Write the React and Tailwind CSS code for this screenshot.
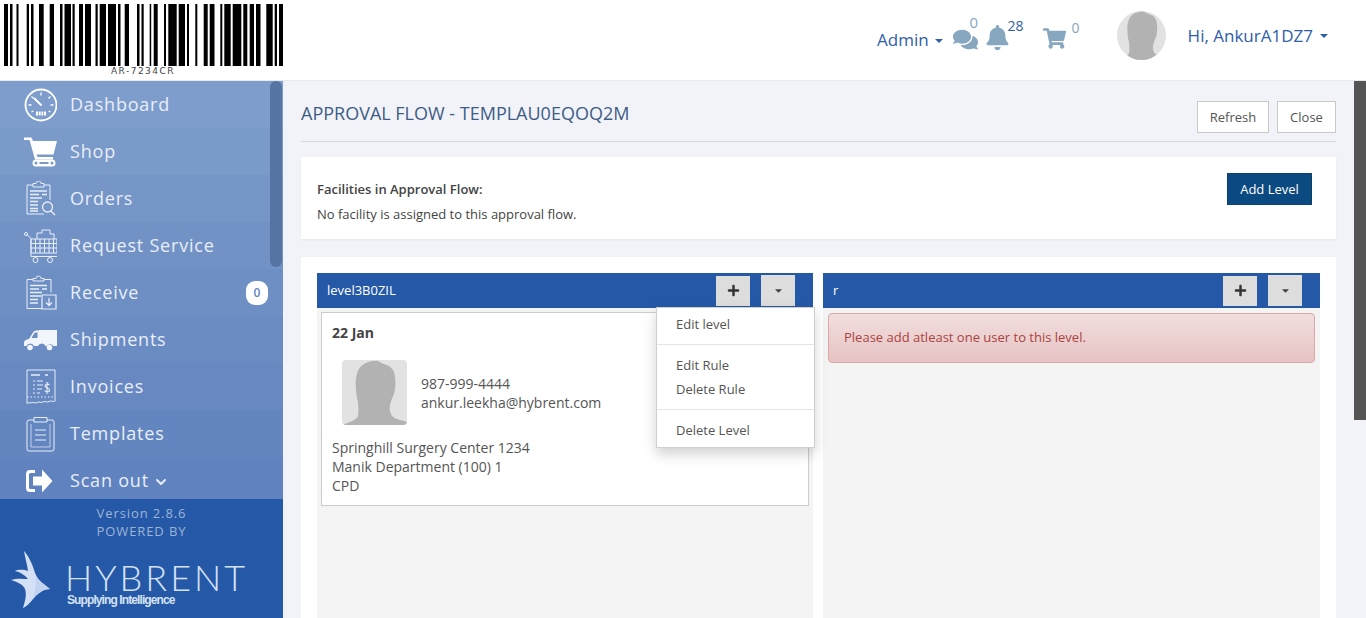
import { ChevronDown } from "lucide-react"
import { FaBell, FaComments, FaShoppingCart, FaPlus, FaCaretDown } from "react-icons/fa"

const bars = [
  [4, 4], [10, 2.5], [16.5, 2], [26.7, 2.3], [31, 2.5], [39, 4.7], [49.7, 4.3], [60, 2.5], [64.5, 6.5], [72.5, 2.2],
  [79, 4], [85, 6], [95.5, 2.2], [99.7, 6.3], [108, 8], [118, 2.5], [124.7, 4.3], [137, 2.5], [141.5, 2.2], [149.7, 1.5],
  [153.7, 4], [164, 2], [168.3, 8.4], [178.7, 6.3], [187, 2], [195.3, 2], [203.7, 4], [209.7, 4.8], [220.3, 2], [224.3, 6.4],
  [232.7, 8.6], [243.3, 4], [249.7, 4.3], [256, 4.5], [266.3, 6.4], [274.7, 2.3], [279, 4],
]

function Silhouette({ className }) {
  return (
    <svg viewBox="0 0 65 65" className={className}>
      <rect width="65" height="65" fill="#e2e2e2" />
      <path
        d="M1 65C6 62 14 61 16 56C17 51 16 46 16 42C15 38 14 34 14 29C13 22 14 14 17 9C21 3 29 0 36 1C39 3 42 4 45 5C50 7 53 12 53 18C54 24 53 30 52 34C50 38 49 41 48 45C47 49 48 53 50 56C54 60 60 60 65 62V65Z"
        fill="#b2b2b2"
      />
    </svg>
  )
}

function DashIcon() {
  return (
    <svg viewBox="0 0 33 36" className="w-[33px] h-[36px]" fill="none" stroke="#fff">
      <circle cx="17" cy="18" r="15.5" strokeWidth="1.8" />
      <path d="M17 5.5v3M7.5 9.5l2 2M26.5 9.5l-2 2M4.5 18h3M26.5 18h3M7.5 25l2-1M26.5 25l-2-1" strokeWidth="1.3" />
      <path d="M10 11l7.5 7.5" strokeWidth="2" />
      <path d="M12 24.5h10v4H12z" fill="#fff" stroke="none" />
      <path d="M14.5 24v5M17 24v5M19.5 24v5" stroke="#7c9aca" strokeWidth="0.8" />
    </svg>
  )
}

function ShopIcon() {
  return (
    <svg viewBox="0 0 33 36" className="w-[33px] h-[36px]" fill="#fff">
      <path d="M0 3.5h7.5l1.5 3.5h24l-3.5 13.5H12.5l1 2.500h15.500v2.500H11L5.500 6H0z" />
      <path d="M12 25.500h16a3.500 3.500 0 0 1 0 7H12a3.500 3.500 0 0 1 0-7zM12 27.500a1.500 1.500 0 0 0 0 3a1.500 1.500 0 0 0 0-3zM28 27.500a1.500 1.500 0 0 0 0 3a1.500 1.500 0 0 0 0-3zM15.500 28v2h9v-2z" fillRule="evenodd" />
    </svg>
  )
}

function OrdersIcon() {
  return (
    <svg viewBox="0 0 33 36" className="w-[33px] h-[36px]" fill="none" stroke="#e8eef8" strokeWidth="1">
      <path d="M9 4H3v29h17M20 4h6v15" />
      <path d="M9 5V2.500h3a2 2 0 0 1 5 0h3V6H9z" />
      <path d="M6 10h17M6 13.500h9M18 13.500h5M6 17h12M6 20.500h8M6 24h8M6 27.500h8M6 30h8" strokeWidth="1.300" />
      <circle cx="23.500" cy="26" r="5" strokeWidth="1.300" />
      <path d="M27 30l4 4" strokeWidth="1.500" />
    </svg>
  )
}

function RequestIcon() {
  return (
    <svg viewBox="0 0 33 36" className="w-[33px] h-[36px]" fill="none" stroke="#e8eef8" strokeWidth="1">
      <circle cx="2" cy="6" r="1.500" />
      <path d="M3 6.500l4 4v18h26" />
      <path d="M7 11h26v14H7zM7 15.500h26M7 20h26M11.500 11v14M16 11v14M20.500 11v14M25 11v14M29.500 11v14" />
      <path d="M13 11V5h5V2h8v4h4v5" />
      <circle cx="11.500" cy="32" r="2.500" />
      <circle cx="26" cy="32" r="2.500" />
    </svg>
  )
}

function ReceiveIcon() {
  return (
    <svg viewBox="0 0 33 36" className="w-[33px] h-[36px]" fill="none" stroke="#e8eef8" strokeWidth="1">
      <path d="M9 4.500H3v29h15M20 4.500h7v13" />
      <path d="M9 6V3.500h3a2 2 0 0 1 5 0h3V6H9z" />
      <path d="M6 10.500h17M6 14h9M18 14h5M6 17.500h12M6 21h11M6 24.500h8M6 28h8" strokeWidth="1.300" />
      <path d="M18 20h14v14H18z" strokeWidth="1.200" />
      <path d="M25 23v7M22 27.500l3 3l3-3" strokeWidth="1.300" />
    </svg>
  )
}

function TruckIcon() {
  return (
    <svg viewBox="0 0 33 36" className="w-[33px] h-[36px]" fill="#f2f5fb">
      <path d="M15 8h18v16H21.500a4 4 0 0 0-7.500 0h-4a4 4 0 0 0-7.500 0H0v-3.500c0-2 2-3 5-3.500l4-6.500c1-1.500 2-2 4-2h2zM13.500 10.500h-1.500c-1 0-1.500.5-2 1.200l-2.500 4.300h6zM33 24h-3.500a4 4 0 0 0-6.500 0z" fillRule="evenodd" />
      <circle cx="6" cy="25.500" r="2.800" />
      <circle cx="25.500" cy="25.500" r="2.800" />
    </svg>
  )
}

function InvoiceIcon() {
  return (
    <svg viewBox="0 0 33 36" className="w-[33px] h-[36px]" fill="none" stroke="#e8eef8" strokeWidth="1">
      <path d="M3 32V1h28v31c-2 1.500-4-1-6 .5s-4-1-6 .5s-4-1-6 .5s-4-1-5 0s-3-.5-5 1z" />
      <path d="M7 6h9M21 6h3" strokeWidth="1.300" />
      <path d="M9 12h2M13 12h6M9 16h2M13 16h6M9 20h2M13 20h5M9 24h2M13 24h3" strokeWidth="1.200" />
      <path d="M23 13v12M25.500 16c-1-1.500-4.500-1-4.500 1s4.500 1.500 4.500 4s-4 2-5 .5" strokeWidth="1.100" />
      <path d="M3 28h28" strokeDasharray="1.500 2" />
    </svg>
  )
}

function TemplateIcon() {
  return (
    <svg viewBox="0 0 33 36" className="w-[33px] h-[36px]" fill="none" stroke="#e8eef8">
      <path d="M10 4H5a2 2 0 0 0-2 2v27a2 2 0 0 0 2 2h23a2 2 0 0 0 2-2V6a2 2 0 0 0-2-2h-5" strokeWidth="1" />
      <path d="M10 6V1.500h13V6z" strokeWidth="1" />
      <path d="M7 8v23h19V8" strokeWidth="1" opacity="0.7" />
      <path d="M11 14h11M11 19h11M11 24h11" strokeWidth="1.200" />
    </svg>
  )
}

function ScanIcon() {
  return (
    <svg viewBox="0 0 33 36" className="w-[33px] h-[36px]" fill="#fff">
      <path d="M11 7H6a4 4 0 0 0-4 4v14a4 4 0 0 0 4 4h5v-3H6.500A1.500 1.500 0 0 1 5 24.500v-13A1.500 1.500 0 0 1 6.500 10H11z" />
      <path d="M9 13.500h9V6.500L28.500 18L18 29.500v-7H9z" />
    </svg>
  )
}

const menu = [
  { label: "Dashboard", icon: DashIcon, bg: "bg-[#7e9dcc]" },
  { label: "Shop", icon: ShopIcon, bg: "bg-[#7a9aca]" },
  { label: "Orders", icon: OrdersIcon, bg: "bg-[#7696c8]" },
  { label: "Request Service", icon: RequestIcon, bg: "bg-[#7292c6]" },
  { label: "Receive", icon: ReceiveIcon, bg: "bg-[#6e8fc4]" },
  { label: "Shipments", icon: TruckIcon, bg: "bg-[#6b8cc3]" },
  { label: "Invoices", icon: InvoiceIcon, bg: "bg-[#6788c1]" },
  { label: "Templates", icon: TemplateIcon, bg: "bg-[#6486c0]" },
  { label: "Scan out", icon: ScanIcon, bg: "bg-[#6083bf]", chevron: true },
]

function LevelHeader({ title }) {
  return (
    <div className="h-[35px] bg-[#2559a8] flex items-center justify-between pl-[10px] pr-[18px]">
      <span className="text-[13px] text-white">{title}</span>
      <div className="flex items-center gap-[11px]">
        <button className="w-[34px] h-[30px] bg-[#dddddd] flex items-center justify-center text-[#333] text-[13px]">
          <FaPlus />
        </button>
        <button className="w-[34px] h-[31px] bg-[#dddddd] flex items-center justify-center text-[#444] text-[11px]">
          <FaCaretDown />
        </button>
      </div>
    </div>
  )
}

export default function App() {
  return (
    <div className="h-screen w-full flex flex-col overflow-hidden bg-white font-['Open_Sans',sans-serif]">
      <header className="h-[81px] shrink-0 border-b border-[#e7e9ee] flex">
        <div className="w-[283px] shrink-0 relative">
          <svg width="283" height="66" className="block">
            {bars.map(([x, w]) => (
              <rect key={x} x={x} y="4" width={w} height="62" fill="#000" />
            ))}
          </svg>
          <div className="text-center pl-[3px] mt-[1px] text-[9px] leading-[9px] tracking-[1.5px] text-[#444] font-['DejaVu_Sans',sans-serif]">AR-7234CR</div>
        </div>
        <div className="flex-1 flex items-start pl-[594px] text-[#2f5eaa]">
          <div className="flex items-center mt-[30px] text-[17px] leading-[20px]">
            Admin
            <span className="ml-[6px] mt-[2px] border-x-[4px] border-x-transparent border-t-[4px] border-t-[#2f5eaa]"></span>
          </div>
          <div className="relative ml-[10px] mt-[27px]">
            <FaComments className="text-[#87a7c0] text-[25px]" />
            <span className="absolute left-[17px] top-[-16px] text-[15px] text-[#87a7c0]">0</span>
          </div>
          <div className="relative ml-[7px] mt-[25px]">
            <FaBell className="text-[#87a7c0] text-[25px]" />
            <span className="absolute left-[23px] top-[-10px] text-[14px]">28</span>
          </div>
          <div className="relative ml-[33px] mt-[27px]">
            <FaShoppingCart className="text-[#87a7c0] text-[23px]" />
            <span className="absolute left-[29px] top-[-10px] text-[14px] text-[#87a7c0]">0</span>
          </div>
          <Silhouette className="w-[49px] h-[49px] rounded-full mt-[11px] ml-[51px]" />
          <div className="flex items-center mt-[26px] ml-[22px] text-[17px] leading-[20px]">
            Hi, AnkurA1DZ7
            <span className="ml-[7px] border-x-[4px] border-x-transparent border-t-[4px] border-t-[#2f5eaa]"></span>
          </div>
        </div>
      </header>

      <div className="flex flex-1 min-h-0">
        <aside className="w-[283px] shrink-0 flex flex-col relative">
          <nav className="flex-1 min-h-0 overflow-hidden">
            {menu.map((item) => {
              const Icon = item.icon
              return (
                <div key={item.label} className={`h-[47px] flex items-center pl-[24px] ${item.bg}`}>
                  <Icon />
                  <span className="ml-[13px] text-[18px] tracking-[0.8px] text-[#e8eef8]">{item.label}</span>
                  {item.chevron && <ChevronDown size={16} strokeWidth={3} className="ml-[4px] mt-[2px] text-[#e8eef8]" />}
                  {item.label === "Receive" && (
                    <span className="ml-auto mr-[15px] w-[22px] h-[24px] rounded-[9px] bg-white text-[#5f85c4] text-[12px] font-semibold flex items-center justify-center">0</span>
                  )}
                </div>
              )
            })}
          </nav>
          <div className="absolute right-[1px] top-0 w-[12px] h-[186px] rounded-[6px] bg-[#5674a3]"></div>
          <div className="h-[119px] shrink-0 bg-[#2559a8] flex flex-col">
            <div className="text-center text-[13px] leading-[18px] tracking-[0.9px] text-[#9db3d4] mt-[5px]">
              Version 2.8.6
              <br />
              POWERED BY
            </div>
            <div className="flex items-start pl-[11px] mt-[11px]">
              <svg viewBox="0 0 40 58" className="w-[40px] h-[58px]">
                <path d="M13 0C17 4 22 14 24 22C27 30 33 33 39 38C32 38 26 43 22 48C19 52 15 56 12 57C14 50 16 44 14 38C12 33 6 31 0 29C6 27 12 28 17 28C14 24 9 21 4 20C8 18 14 19 17 20C16 13 14 6 13 0Z" fill="#d3e0f6" />
                <path d="M24 22C27 30 33 33 39 38C32 38 26 43 22 48C24 40 26 30 24 22Z" fill="#c2d3f0" />
              </svg>
              <div className="ml-[16px] text-[#d5e2f5]">
                <div className="text-[36px] leading-[28px] mt-[12px] -ml-[2px] font-light tracking-[3px] font-['Lato',sans-serif]">HYBRENT</div>
                <div className="text-[12px] leading-[14px] mt-[2px] font-bold tracking-[-0.9px] font-['Liberation_Sans',sans-serif]">Supplying Intelligence</div>
              </div>
            </div>
          </div>
        </aside>

        <main className="flex-1 min-w-0 bg-[#f1f3f8] px-[18px] overflow-hidden">
          <div className="flex items-start justify-between pt-[20px] pb-[8px] border-b border-[#d5d7da]">
            <h1 className="text-[18px] leading-[24px] text-[#3e5c85] uppercase">Approval Flow - TEMPLAU0EQOQ2M</h1>
            <div className="flex gap-[8px] text-[13px] text-[#555]">
              <button className="w-[72px] h-[32px] pt-[1px] bg-white border border-[#c8c8c8]">Refresh</button>
              <button className="w-[59px] h-[32px] pt-[1px] bg-white border border-[#c8c8c8]">Close</button>
            </div>
          </div>

          <section className="mt-[15px] h-[82px] bg-white shadow-[0_1px_2px_rgba(0,0,0,0.05)] flex justify-between pl-[16px] pr-[24px] pt-[16px]">
            <div className="text-[13px] text-[#444]">
              <div className="font-semibold leading-[18px] mt-[7px]">Facilities in Approval Flow:</div>
              <div className="leading-[18px] mt-[7px]">No facility is assigned to this approval flow.</div>
            </div>
            <button className="w-[85px] h-[32px] pt-[1px] bg-[#0b4a80] border border-[#0a3f6e] text-white text-[13px] font-medium">Add Level</button>
          </section>

          <section className="mt-[18px] bg-white p-[16px] grid grid-cols-[496px_497px] gap-[10px]">
            <div className="relative bg-[#f4f4f4] h-[400px]">
              <LevelHeader title="level3B0ZIL" />
              <div className="p-[4px]">
                <div className="h-[194px] bg-white border border-[#cccccc] pl-[10px] pt-[10px] text-[14px] leading-[19px] text-[#555]">
                  <div className="font-bold text-[#444]">22 Jan</div>
                  <div className="flex items-center mt-[18px] ml-[10px]">
                    <Silhouette className="w-[65px] h-[65px] rounded-[4px]" />
                    <div className="ml-[14px]">
                      <div>987-999-4444</div>
                      <div>ankur.leekha@hybrent.com</div>
                    </div>
                  </div>
                  <div className="mt-[13px]">
                    <div>Springhill Surgery Center 1234</div>
                    <div>Manik Department (100) 1</div>
                    <div>CPD</div>
                  </div>
                </div>
              </div>
              <div className="absolute left-[339px] top-[34px] w-[159px] h-[141px] z-10 bg-white border border-[#cfcfcf] shadow-[0_6px_12px_rgba(0,0,0,0.18)] text-[13px] leading-[18px] text-[#555]">
                <div className="pl-[19px] pt-[7px] h-[36px]">Edit level</div>
                <div className="border-t border-[#e5e5e5] pl-[19px] pt-[11px] h-[65px]">
                  <div>Edit Rule</div>
                  <div className="mt-[6px]">Delete Rule</div>
                </div>
                <div className="border-t border-[#e5e5e5] pl-[19px] pt-[11px]">Delete Level</div>
              </div>
            </div>

            <div className="bg-[#f4f4f4] h-[400px]">
              <LevelHeader title="r" />
              <div className="px-[5px] pt-[5px]">
                <div className="h-[50px] rounded-[4px] border border-[#dca7a7] bg-gradient-to-b from-[#f2dede] to-[#e7c3c3] flex items-center pl-[15px] text-[13px] text-[#a94442]">
                  Please add atleast one user to this level.
                </div>
              </div>
            </div>
          </section>
        </main>

        <div className="w-[12px] shrink-0 bg-[#f1f3f8] flex flex-col">
          <div className="h-[339px] bg-[#555555]"></div>
        </div>
      </div>
    </div>
  )
}
